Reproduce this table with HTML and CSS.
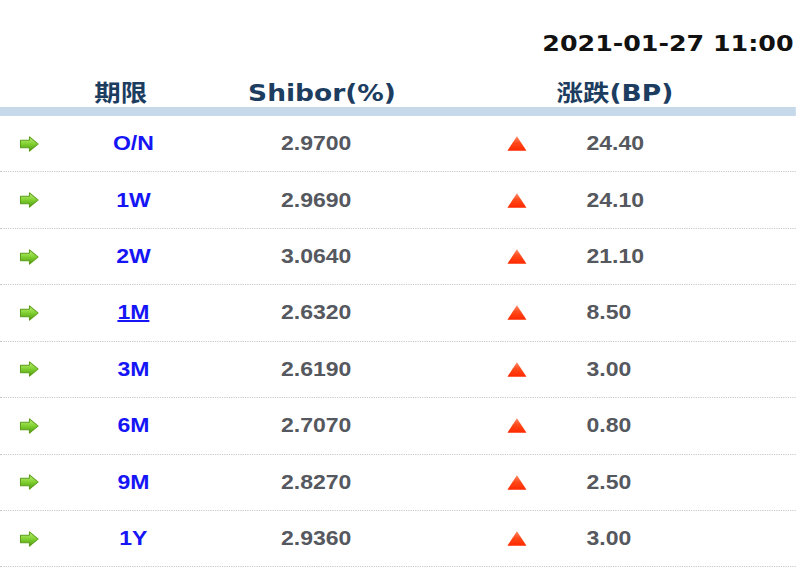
FILE: index.html
```html
<!DOCTYPE html>
<html lang="zh">
<head>
<meta charset="utf-8">
<title>Shibor</title>
<link rel="stylesheet" href="styles.css">
</head>
<body>
<svg width="0" height="0" class="defs">
  <defs>
    <linearGradient id="g-arrow" x1="0" y1="0" x2="0" y2="1">
      <stop offset="0" stop-color="#bff07a"/>
      <stop offset="0.5" stop-color="#80d030"/>
      <stop offset="1" stop-color="#4f9a12"/>
    </linearGradient>
    <linearGradient id="g-tri" x1="0" y1="0" x2="0" y2="1">
      <stop offset="0" stop-color="#ff8a6a"/>
      <stop offset="0.45" stop-color="#ff4a1a"/>
      <stop offset="1" stop-color="#ff2800"/>
    </linearGradient>
    <symbol id="arrow" viewBox="0 0 17 16">
      <path d="M0.8 4.2H8.6V0.8l7.6 7.2-7.6 7.2v-3.4H0.8z" fill="url(#g-arrow)" stroke="#5e9e1c" stroke-width="0.9" stroke-linejoin="round"/>
    </symbol>
    <symbol id="tri" viewBox="0 0 17 15">
      <path d="M8.5 0.3L16.8 14.8H0.2z" fill="url(#g-tri)"/>
    </symbol>
  </defs>
</svg>
<div class="page">
  <div class="date">2021-01-27 11:00</div>
  <div class="head">
    <span></span>
    <span class="c">期限</span>
    <span class="c">Shibor(%)</span>
    <span></span>
    <span>涨跌(BP)</span>
  </div>
  <div class="bar"></div>
  <div class="rows">
    <div class="row"><span class="ic"><svg class="arrow"><use href="#arrow"/></svg></span><span class="term">O/N</span><span class="val">2.9700</span><span></span><span class="ic"><svg class="tri"><use href="#tri"/></svg></span><span class="chg">24.40</span></div>
    <div class="row"><span class="ic"><svg class="arrow"><use href="#arrow"/></svg></span><span class="term">1W</span><span class="val">2.9690</span><span></span><span class="ic"><svg class="tri"><use href="#tri"/></svg></span><span class="chg">24.10</span></div>
    <div class="row"><span class="ic"><svg class="arrow"><use href="#arrow"/></svg></span><span class="term">2W</span><span class="val">3.0640</span><span></span><span class="ic"><svg class="tri"><use href="#tri"/></svg></span><span class="chg">21.10</span></div>
    <div class="row"><span class="ic"><svg class="arrow"><use href="#arrow"/></svg></span><span class="term"><a class="link">1M</a></span><span class="val">2.6320</span><span></span><span class="ic"><svg class="tri"><use href="#tri"/></svg></span><span class="chg">8.50</span></div>
    <div class="row"><span class="ic"><svg class="arrow"><use href="#arrow"/></svg></span><span class="term">3M</span><span class="val">2.6190</span><span></span><span class="ic"><svg class="tri"><use href="#tri"/></svg></span><span class="chg">3.00</span></div>
    <div class="row"><span class="ic"><svg class="arrow"><use href="#arrow"/></svg></span><span class="term">6M</span><span class="val">2.7070</span><span></span><span class="ic"><svg class="tri"><use href="#tri"/></svg></span><span class="chg">0.80</span></div>
    <div class="row"><span class="ic"><svg class="arrow"><use href="#arrow"/></svg></span><span class="term">9M</span><span class="val">2.8270</span><span></span><span class="ic"><svg class="tri"><use href="#tri"/></svg></span><span class="chg">2.50</span></div>
    <div class="row"><span class="ic"><svg class="arrow"><use href="#arrow"/></svg></span><span class="term">1Y</span><span class="val">2.9360</span><span></span><span class="ic"><svg class="tri"><use href="#tri"/></svg></span><span class="chg">3.00</span></div>
  </div>
</div>
</body>
</html>
```
FILE: styles.css
```css
html, body {
  margin: 0;
  padding: 0;
  background: #fff;
}
.defs {
  position: absolute;
  width: 0;
  height: 0;
  overflow: hidden;
}
.page {
  width: 692px;
  transform: scaleX(1.15);
  transform-origin: 0 0;
}
.date {
  margin-top: 30px;
  height: 28px;
  line-height: 28px;
  text-align: right;
  padding-right: 2px;
  font-family: "DejaVu Sans", "Noto Sans CJK SC", sans-serif;
  font-weight: bold;
  font-size: 22px;
  color: #111;
}
.head {
  display: grid;
  grid-template-columns: 50px 110px 240px 84px 1fr;
  padding-top: 21px;
  height: 28px;
  line-height: 28px;
  font-family: "DejaVu Sans", "Noto Sans CJK SC", sans-serif;
  font-weight: bold;
  font-size: 23px;
  color: #1c3d60;
  white-space: nowrap;
}
.head .c {
  text-align: center;
}
.bar {
  height: 9px;
  background: #c5d9ea;
}
.row {
  display: grid;
  grid-template-columns: 60px 112px 206px 63px 69px 1fr;
  align-items: center;
  height: 56.43px;
  box-sizing: border-box;
  border-bottom: 1px dotted #c6c6c6;
  font-family: "Liberation Sans", Arial, sans-serif;
  font-weight: bold;
  font-size: 20px;
}
.ic {
  display: flex;
  align-items: center;
}
.row .ic:first-child {
  padding-left: 17px;
}
.arrow {
  width: 17px;
  height: 16px;
}
.tri {
  width: 17px;
  height: 15px;
}
.term {
  text-align: center;
  color: #1515f5;
}
.link {
  color: #1515f5;
  text-decoration: underline;
}
.val {
  text-align: center;
  color: #55585e;
}
.chg {
  color: #55585e;
}
```
